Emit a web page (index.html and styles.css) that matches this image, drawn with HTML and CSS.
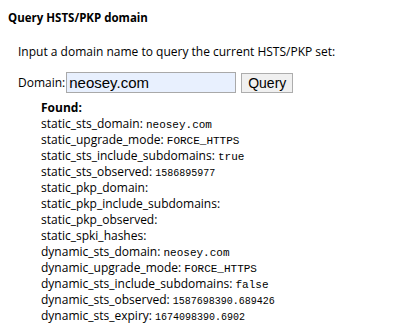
FILE: index.html
```html
<!DOCTYPE html>
<html lang="en">
<head>
    <meta charset="UTF-8">
    <title>HSTS</title>
    <link rel="stylesheet" href="styles.css">
</head>
<body>
    <h4 class="title">Query HSTS/PKP domain</h4>
    <div class="section">
        <p class="hint">Input a domain name to query the current HSTS/PKP set:</p>
        <form class="query-form">
            <label for="domain">Domain:</label>
            <input type="text" id="domain" value="neosey.com">
            <button type="button">Query</button>
        </form>
        <div class="result">
            <b>Found:</b><br>
            static_sts_domain: <tt>neosey.com</tt><br>
            static_upgrade_mode: <tt>FORCE_HTTPS</tt><br>
            static_sts_include_subdomains: <tt>true</tt><br>
            static_sts_observed: <tt class="num">1586895977</tt><br>
            static_pkp_domain: <br>
            static_pkp_include_subdomains: <br>
            static_pkp_observed: <br>
            static_spki_hashes: <br>
            dynamic_sts_domain: <tt>neosey.com</tt><br>
            dynamic_upgrade_mode: <tt>FORCE_HTTPS</tt><br>
            dynamic_sts_include_subdomains: <tt>false</tt><br>
            dynamic_sts_observed: <tt class="num">1587698390.689426</tt><br>
            dynamic_sts_expiry: <tt class="num">1674098390.6902</tt>
        </div>
    </div>
</body>
</html>
```

FILE: styles.css
```css
body {
    margin: 8px;
    font-family: "Open Sans", Arial, sans-serif;
    font-size: 12px;
    color: #000;
    background: #fff;
}

.title {
    margin: 0;
    padding-top: 1px;
    font-size: 11.5px;
    font-weight: bold;
    line-height: 18px;
}

.section {
    padding-left: 10px;
}

.hint {
    margin: 17px 0 0;
    line-height: 16px;
}

.query-form {
    display: flex;
    align-items: center;
    margin-top: 12px;
}

.query-form label {
    margin-right: 1px;
}

.query-form input {
    width: 170px;
    height: 21px;
    box-sizing: border-box;
    padding: 0 2px;
    border: 1px solid #a9a9a9;
    background: #e8f0fe;
    font-family: "Liberation Sans", Arial, sans-serif;
    font-size: 15px;
}

.query-form button {
    margin-left: 5px;
    height: 20px;
    width: 52px;
    padding: 0;
    border: 1px solid #adadad;
    background: #f0f0f0;
    font-family: "Liberation Sans", Arial, sans-serif;
    font-size: 14px;
}

.result {
    margin-top: 7px;
    padding-left: 23px;
    line-height: 16px;
}

tt {
    font-family: "Liberation Mono", monospace;
    font-size: 11px;
    line-height: 1;
}

tt.num {
    font-size: 10px;
}
```
